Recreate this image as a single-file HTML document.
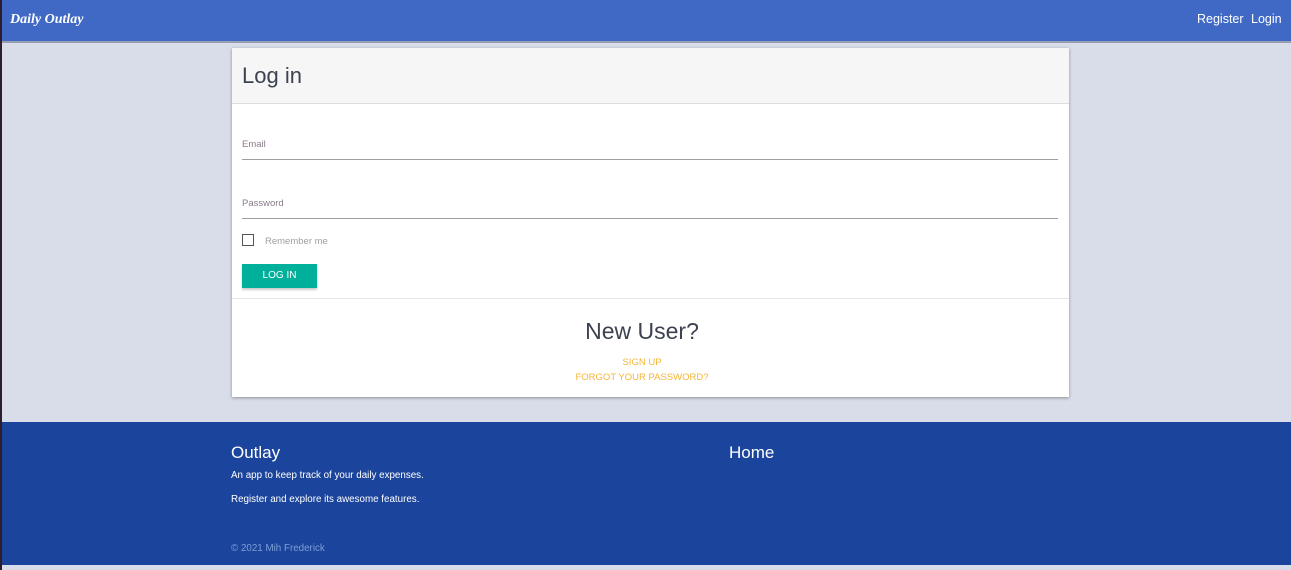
<!DOCTYPE html>
<html><head><style>
*{margin:0;padding:0;box-sizing:border-box}
body{width:1291px;height:570px;background:#d9dce9;font-family:"Liberation Sans",sans-serif;position:relative;overflow:hidden}
.strip{position:absolute;left:0;top:0;width:2px;height:570px;background:#2b1f2d;z-index:5}
.nav{position:absolute;left:0;top:0;width:1291px;height:43px;background:#3f69c4;border-bottom:2px solid #9a9fb0}
.logo{position:absolute;left:10px;top:12px;color:#fff;font-family:"Liberation Serif",serif;font-style:italic;font-weight:bold;font-size:14px}
.nl{position:absolute;top:12px;color:#fff;font-size:12.5px}
.card{position:absolute;left:232px;top:48px;width:837px;height:349px;background:#fff;box-shadow:0 1px 3px rgba(0,0,0,.35)}
.hd{height:56px;background:#f6f6f6;border-bottom:1px solid #ddd;padding:15px 10px;font-size:22px;color:#3d4250}
.lbl{position:absolute;left:10px;font-size:9.5px;color:#8a7a8a}
.ln{position:absolute;left:10px;width:816px;height:1px;background:#9e9e9e}
.cb{position:absolute;left:10px;top:186px;width:12px;height:12px;border:1.5px solid #555}
.rm{position:absolute;left:33px;top:188px;font-size:9.5px;color:#a0a0a0}
.btn{position:absolute;left:10px;top:216px;width:75px;height:24px;background:#00b09b;color:#fff;font-size:10px;text-align:center;line-height:24px;box-shadow:0 2px 2px rgba(0,0,0,.2)}
.sep{position:absolute;left:0;top:250px;width:837px;height:1px;background:#e5e5e5}
.nu{position:absolute;left:0;width:820px;text-align:center;top:270px;font-size:23px;color:#3d4250}
.lk{position:absolute;left:0;width:820px;text-align:center;font-size:9.5px;color:#f6b537}
.ft{position:absolute;left:0;top:422px;width:1291px;height:143px;background:#1b449c}
.ft div{position:absolute;color:#fff}
</style></head><body>
<div class="strip"></div>
<div class="nav"><div class="logo">Daily Outlay</div><div class="nl" style="left:1197px">Register</div><div class="nl" style="left:1251px">Login</div></div>
<div class="card">
<div class="hd">Log in</div>
<div class="lbl" style="top:91px">Email</div><div class="ln" style="top:111px"></div>
<div class="lbl" style="top:150px">Password</div><div class="ln" style="top:170px"></div>
<div class="cb"></div><div class="rm">Remember me</div>
<div class="btn">LOG IN</div>
<div class="sep"></div>
<div class="nu">New User?</div>
<div class="lk" style="top:309px">SIGN UP</div>
<div class="lk" style="top:324px">FORGOT YOUR PASSWORD?</div>
</div>
<div class="ft">
<div style="left:231px;top:21px;font-size:17px">Outlay</div>
<div style="left:231px;top:48px;font-size:9.8px">An app to keep track of your daily expenses.</div>
<div style="left:231px;top:72px;font-size:9.8px">Register and explore its awesome features.</div>
<div style="left:231px;top:121px;font-size:9.8px;color:#7e9fd6">© 2021 Mih Frederick</div>
<div style="left:729px;top:21px;font-size:17px">Home</div>
</div>
</body></html>
